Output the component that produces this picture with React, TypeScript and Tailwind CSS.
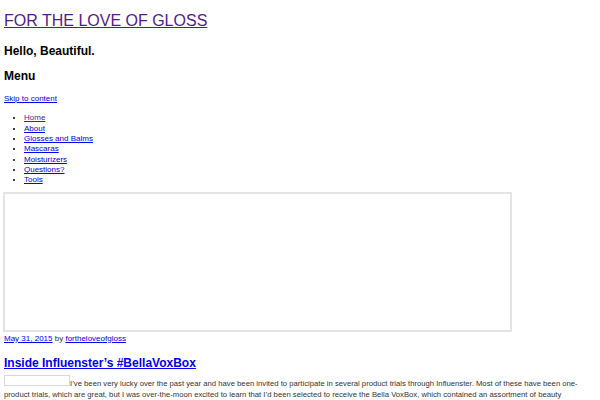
export default function App() {
  const menu = [
    'Home',
    'About',
    'Glosses and Balms',
    'Mascaras',
    'Moisturizers',
    'Questions?',
    'Tools',
  ];

  return (
    <div className="min-h-[400px] bg-white px-[4px] font-['Liberation_Sans',Arial,sans-serif] text-black">
      <header>
        <h1 className="pt-[12px] text-[16px] leading-[18px]">
          <a href="#" className="text-[#551A8B] underline">
            FOR THE LOVE OF GLOSS
          </a>
        </h1>
        <h2 className="mt-[14px] text-[12px] font-bold leading-[14px]">
          Hello, Beautiful.
        </h2>
        <nav>
          <h2 className="mt-[11px] text-[12px] font-bold leading-[14px]">
            Menu
          </h2>
          <a
            href="#"
            className="mt-[11px] block w-fit text-[8px] leading-[10.4px] text-[#0000EE] underline"
          >
            Skip to content
          </a>
          <ul className="mt-[9px] list-disc pl-[20px] text-[8px] leading-[10.35px]">
            {menu.map((item, i) => (
              <li key={item}>
                <a
                  href="#"
                  className={
                    i === 0
                      ? 'text-[#551A8B] underline'
                      : 'text-[#0000EE] underline'
                  }
                >
                  {item}
                </a>
              </li>
            ))}
          </ul>
        </nav>
      </header>

      <main>
        <div className="mt-[6px] -ml-[1px] h-[140px] w-[509px] border-2 border-[#e4e4e4]" />
        <div className="mt-[2px] text-[8px] leading-[10.4px] text-[#333]">
          <a href="#" className="text-[#0000EE] underline">
            May 31, 2015
          </a>{' '}
          by{' '}
          <a href="#" className="text-[#0000EE] underline">
            fortheloveofgloss
          </a>
        </div>
        <h2 className="mt-[12px] text-[12px] font-bold leading-[14px]">
          <a href="#" className="text-[#0000EE] underline">
            Inside Influenster’s #BellaVoxBox
          </a>
        </h2>
        <p className="mt-[5px] text-[7.7px] leading-[10.4px] text-[#333]">
          <span className="inline-block h-[11px] w-[66px] border border-[#d8d8d8] align-baseline" />
          I’ve been very lucky over the past year and have been invited to
          participate in several product trials through Influenster. Most of
          these have been one-product trials, which are great, but I was
          over-the-moon excited to learn that I’d been selected to receive the
          Bella VoxBox, which contained an assortment of beauty accessories
          and skincare products.
        </p>
      </main>
    </div>
  );
}
